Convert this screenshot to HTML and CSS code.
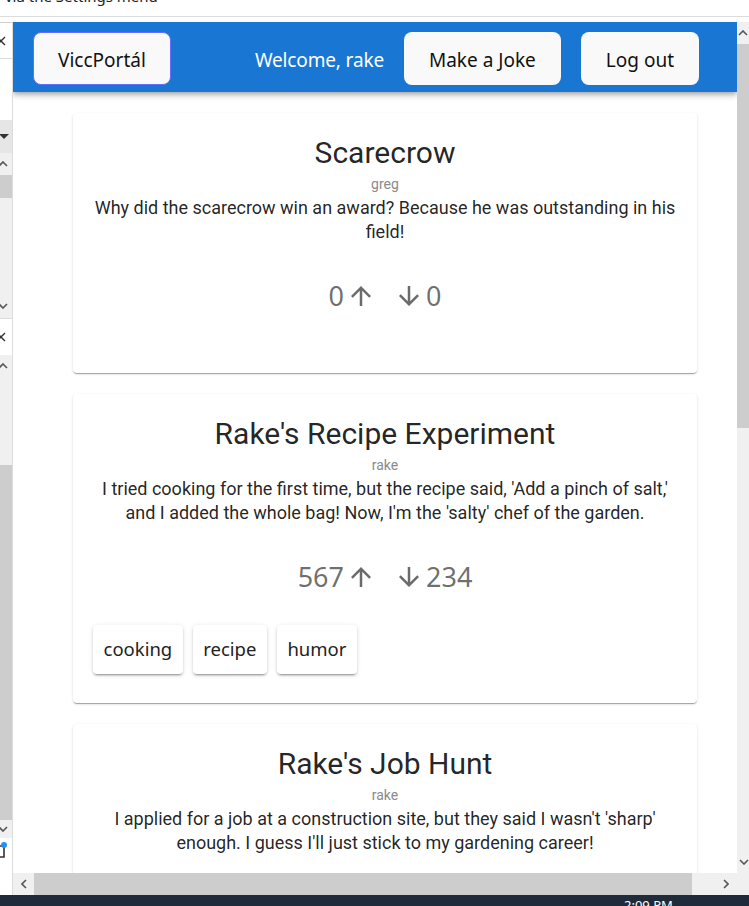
FILE: index.html
```html
<!DOCTYPE html>
<html lang="hu">
<head>
<meta charset="utf-8">
<title>ViccPortál</title>
<link rel="stylesheet" href="styles.css">
</head>
<body>
<div class="topstrip">
  <span class="toptext">via the Settings menu</span>
  <span class="topclose">✕</span>
</div>
<div class="topgap"></div>
<div class="main">
  <div class="sidebar">
    <div class="sb sb1"><svg class="xicon" viewBox="0 0 10 10" width="10" height="10"><path d="M1 1L9 9M9 1L1 9" stroke="#333" stroke-width="1.4" fill="none"/></svg></div>
    <div class="sb sb2"></div>
    <div class="sb sb3"><svg viewBox="0 0 10 6" width="10" height="6" class="tri"><path d="M0 0H10L5 5z" fill="#333"/></svg></div>
    <div class="sb sb4"><svg viewBox="0 0 10 6" width="10" height="6" class="chev"><path d="M1 5L5 1L9 5" stroke="#555" stroke-width="1.6" fill="none"/></svg></div>
    <div class="sb sb5"></div>
    <div class="sb sb6"><svg viewBox="0 0 10 6" width="10" height="6" class="chev"><path d="M1 1L5 5L9 1" stroke="#555" stroke-width="1.6" fill="none"/></svg></div>
    <div class="sb sb7"><svg class="xicon" viewBox="0 0 10 10" width="10" height="10"><path d="M1 1L9 9M9 1L1 9" stroke="#333" stroke-width="1.4" fill="none"/></svg></div>
    <div class="sb sb8"><svg viewBox="0 0 10 6" width="10" height="6" class="chev"><path d="M1 5L5 1L9 5" stroke="#555" stroke-width="1.6" fill="none"/></svg></div>
    <div class="sb sb9"></div>
    <div class="sb sb10"><svg viewBox="0 0 10 6" width="10" height="6" class="chev"><path d="M1 1L5 5L9 1" stroke="#555" stroke-width="1.6" fill="none"/></svg></div>
    <div class="sb sb11"><svg viewBox="0 0 12 18" width="12" height="18" class="bracket"><path d="M-2 4H6V15H-2" stroke="#333" stroke-width="1.6" fill="none"/><circle cx="6" cy="3" r="3" fill="#1e90ff"/></svg></div>
  </div>
  <div class="viewport">
    <header class="navbar">
      <button class="btn btn-focus">ViccPortál</button>
      <div class="nav-right">
        <span class="welcome">Welcome, rake</span>
        <button class="btn">Make a Joke</button>
        <button class="btn">Log out</button>
      </div>
    </header>
    <div class="feed">
      <article class="card">
        <h2 class="title">Scarecrow</h2>
        <div class="author">greg</div>
        <p class="body">Why did the scarecrow win an award? Because he was outstanding in his field!</p>
        <div class="votes">
          <span class="vote"><span>0</span><svg class="arrow" viewBox="0 0 24 24"><path d="M4 12l1.41 1.41L11 7.83V20h2V7.83l5.58 5.59L20 12l-8-8-8 8z"/></svg></span>
          <span class="vote"><svg class="arrow" viewBox="0 0 24 24"><path d="M20 12l-1.41-1.41L13 16.17V4h-2v12.17l-5.58-5.59L4 12l8 8 8-8z"/></svg><span>0</span></span>
        </div>
        <div class="tags"></div>
      </article>
      <article class="card">
        <h2 class="title">Rake's Recipe Experiment</h2>
        <div class="author">rake</div>
        <p class="body">I tried cooking for the first time, but the recipe said, 'Add a pinch of salt,' and I added the whole bag! Now, I'm the 'salty' chef of the garden.</p>
        <div class="votes">
          <span class="vote"><span>567</span><svg class="arrow" viewBox="0 0 24 24"><path d="M4 12l1.41 1.41L11 7.83V20h2V7.83l5.58 5.59L20 12l-8-8-8 8z"/></svg></span>
          <span class="vote"><svg class="arrow" viewBox="0 0 24 24"><path d="M20 12l-1.41-1.41L13 16.17V4h-2v12.17l-5.58-5.59L4 12l8 8 8-8z"/></svg><span>234</span></span>
        </div>
        <div class="tags">
          <span class="tag">cooking</span>
          <span class="tag">recipe</span>
          <span class="tag">humor</span>
        </div>
      </article>
      <article class="card">
        <h2 class="title">Rake's Job Hunt</h2>
        <div class="author">rake</div>
        <p class="body">I applied for a job at a construction site, but they said I wasn't 'sharp' enough. I guess I'll just stick to my gardening career!</p>
        <div class="votes">
          <span class="vote"><span>0</span><svg class="arrow" viewBox="0 0 24 24"><path d="M4 12l1.41 1.41L11 7.83V20h2V7.83l5.58 5.59L20 12l-8-8-8 8z"/></svg></span>
          <span class="vote"><svg class="arrow" viewBox="0 0 24 24"><path d="M20 12l-1.41-1.41L13 16.17V4h-2v12.17l-5.58-5.59L4 12l8 8 8-8z"/></svg><span>0</span></span>
        </div>
        <div class="tags"></div>
      </article>
    </div>
  </div>
  <div class="vscroll">
    <div class="vs-up"><svg viewBox="0 0 10 6" width="10" height="6"><path d="M1 5L5 1L9 5" stroke="#555" stroke-width="1.6" fill="none"/></svg></div>
    <div class="vs-thumb"></div>
    <div class="vs-track"><svg viewBox="0 0 10 6" width="10" height="6"><path d="M1 1L5 5L9 1" stroke="#555" stroke-width="1.6" fill="none"/></svg></div>
  </div>
</div>
<div class="hscroll">
  <div class="hs-blank"></div>
  <div class="hs-left"><svg viewBox="0 0 6 10" width="6" height="10"><path d="M5 1L1 5L5 9" stroke="#555" stroke-width="1.6" fill="none"/></svg></div>
  <div class="hs-thumb"></div>
  <div class="hs-track"><svg viewBox="0 0 6 10" width="6" height="10"><path d="M1 1L5 5L1 9" stroke="#555" stroke-width="1.6" fill="none"/></svg></div>
  <div class="hs-corner"></div>
</div>
<div class="taskbar"><span class="clock">2:09 PM</span></div>
</body>
</html>
```

FILE: styles.css
```css
* { box-sizing: border-box; }

body {
  margin: 0;
  width: 749px;
  height: 906px;
  overflow: hidden;
  background: #fff;
  font-family: "Noto Sans", sans-serif;
}

.topstrip {
  height: 17px;
  border-bottom: 1px solid #dcdcdc;
  display: flex;
  justify-content: space-between;
  overflow: hidden;
}
.toptext {
  font: 15px/18px "Noto Sans", sans-serif;
  color: #222;
  margin-top: -13px;
  margin-left: 5px;
}
.topclose {
  font: 13px/16px "DejaVu Sans", sans-serif;
  color: #333;
  margin-top: -11px;
  margin-right: 18px;
}
.topgap {
  height: 5px;
}

.main {
  display: flex;
  height: 851px;
}

.sidebar {
  width: 13px;
  border-right: 1px solid #dcdcdc;
  border-top: 1px solid #d0d0d0;
  display: flex;
  flex-direction: column;
  overflow: hidden;
}
.sb { flex: none; display: flex; align-items: center; }
.sb1 { height: 36px; border-bottom: 1px solid #dcdcdc; }
.sb2 { height: 61px; }
.sb3 { height: 33px; background: #e6e6e6; }
.sb4 { height: 22px; background: #f0f0f0; }
.sb5 { height: 23px; background: #cdcdcd; }
.sb6 { height: 120px; background: #f0f0f0; align-items: flex-end; padding-bottom: 9px; }
.sb7 { height: 37px; border-top: 1px solid #dcdcdc; }
.sb8 { height: 110px; background: #f0f0f0; align-items: flex-start; padding-top: 8px; }
.sb9 { height: 355px; background: #cdcdcd; }
.sb10 { height: 18px; background: #f0f0f0; }
.sb11 { height: 34px; align-items: flex-start; padding-top: 4px; }
.xicon { margin-left: -4px; }
.tri { margin-left: -1px; }
.chev { margin-left: -2px; }
.bracket { margin-left: -2px; }

.viewport {
  width: 724px;
  flex: none;
  overflow: hidden;
}

.navbar {
  height: 70px;
  background: #1976d2;
  display: flex;
  align-items: center;
  padding: 10px 38px 7px 20px;
  position: relative;
  z-index: 1;
  box-shadow: 0 2px 4px -1px rgba(0,0,0,0.2), 0 4px 5px 0 rgba(0,0,0,0.14), 0 1px 10px 0 rgba(0,0,0,0.12);
}
.nav-right {
  margin-left: auto;
  display: flex;
  align-items: center;
  gap: 20px;
}
.btn {
  font-family: "Noto Sans", sans-serif;
  font-size: 19px;
  font-weight: 400;
  line-height: 1.5;
  padding: 12.8px 24px 10px;
  border-radius: 8px;
  border: 1px solid transparent;
  background: #f9f9f9;
  color: #111;
  cursor: pointer;
}
.btn-focus {
  border-color: #646cff;
}
.welcome {
  color: #fff;
  font-size: 19px;
  line-height: 1.5;
  letter-spacing: -0.15px;
  padding-top: 3px;
}

.feed {
  padding: 21px 0 0 60px;
  display: flex;
  flex-direction: column;
  gap: 21px;
}
.card {
  width: 624px;
  flex: none;
  background: #fff;
  border-radius: 4px;
  padding: 22px 20px 29px;
  text-align: center;
  box-shadow: 0 2px 1px -1px rgba(0,0,0,0.2), 0 1px 1px 0 rgba(0,0,0,0.14), 0 1px 3px 0 rgba(0,0,0,0.12);
  font-family: Roboto, sans-serif;
  color: rgba(0,0,0,0.87);
}
.title {
  margin: 0;
  font-size: 30px;
  font-weight: 400;
  line-height: 36px;
}
.author {
  margin-top: 4px;
  font-size: 14px;
  line-height: 18px;
  color: #8a8a8a;
}
.body {
  margin: 3px 0 0;
  font-size: 18px;
  line-height: 24px;
}
.votes {
  margin-top: 34px;
  display: flex;
  justify-content: center;
  gap: 18px;
  height: 36px;
  color: rgba(0,0,0,0.58);
  font-family: "Noto Sans", sans-serif;
  font-size: 27px;
  line-height: 36px;
}
.vote {
  display: flex;
  align-items: center;
  gap: 2px;
}
.arrow {
  width: 30px;
  height: 30px;
  fill: rgba(0,0,0,0.58);
}
.tags {
  margin-top: 30px;
  display: flex;
  gap: 10px;
}
.tag {
  background: #fff;
  border-radius: 4px;
  padding: 10px 10.5px;
  font-family: "Noto Sans", sans-serif;
  font-size: 18.5px;
  line-height: 28.5px;
  color: #222;
  box-shadow: 0 3px 1px -2px rgba(0,0,0,0.2), 0 2px 2px 0 rgba(0,0,0,0.14), 0 1px 5px 0 rgba(0,0,0,0.12);
}

.vscroll {
  width: 12px;
  flex: none;
  display: flex;
  flex-direction: column;
  background: #f0f0f0;
}
.vs-up {
  height: 22px;
  display: flex;
  align-items: center;
  padding-left: 1px;
}
.vs-thumb {
  height: 384px;
  background: #cdcdcd;
}
.vs-track {
  flex: 1;
  display: flex;
  align-items: flex-end;
  padding: 0 0 8px 2px;
}

.hscroll {
  height: 22px;
  display: flex;
}
.hs-blank { width: 13px; border-right: 1px solid #dcdcdc; background: #fff; }
.hs-left { width: 21px; background: #f0f0f0; display: flex; align-items: center; justify-content: center; }
.hs-thumb { width: 658px; background: #cdcdcd; }
.hs-track { width: 45px; background: #f0f0f0; display: flex; align-items: center; justify-content: flex-end; padding-right: 8px; }
.hs-corner { width: 12px; background: #f0f0f0; }

.taskbar {
  height: 11px;
  background: #1f2b3a;
  overflow: hidden;
  padding-left: 624px;
}
.clock {
  display: block;
  color: #fff;
  font: 13px/16px "Noto Sans", sans-serif;
  margin-top: 2px;
}
```
